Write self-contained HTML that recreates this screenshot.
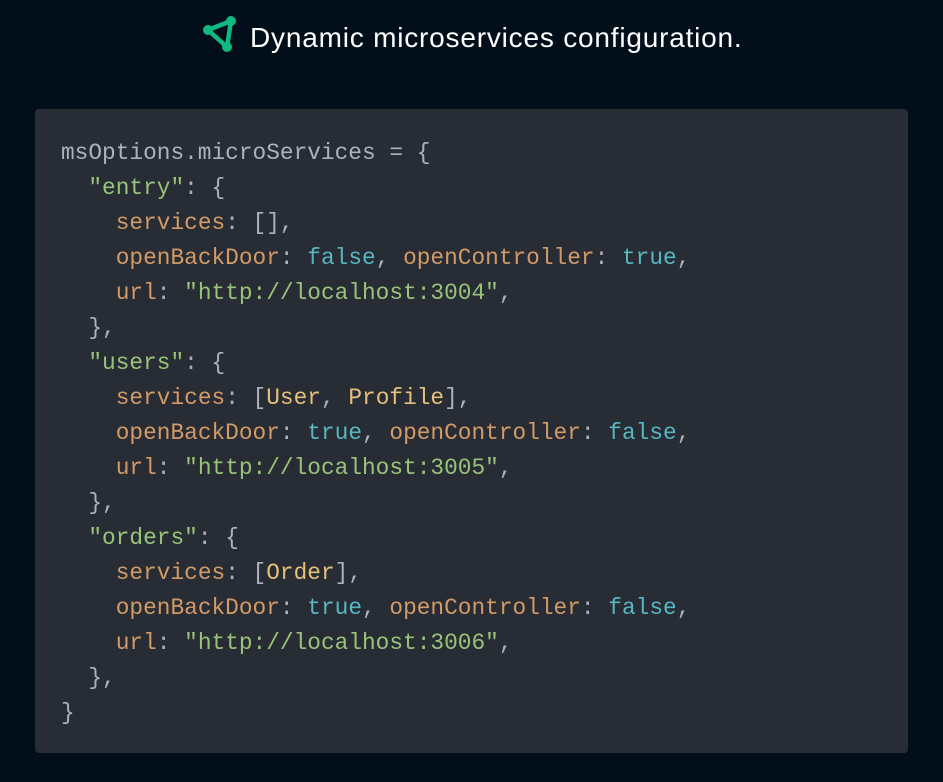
<!DOCTYPE html>
<html><head><style>
body{margin:0;width:943px;height:782px;background:#020f1a;overflow:hidden;font-family:"Liberation Sans",sans-serif}
.title{position:absolute;top:18px;left:250px;color:#fff;font-size:28px;letter-spacing:0.8px;line-height:40px;white-space:nowrap}
.icon{position:absolute;left:202px;top:16px}
.panel{position:absolute;left:35px;top:109px;width:873px;height:644px;background:#282c34;border-radius:4px}
pre{margin:0;position:absolute;left:61px;top:136px;font-family:"Liberation Mono",monospace;font-size:22.8px;line-height:35px;color:#abb2bf}
.g{color:#98c379}.o{color:#d19a66}.c{color:#56b6c2}.y{color:#e5c07b}
</style></head><body>
<svg class="icon" width="36" height="36" viewBox="0 0 36 36">
<path d="M29 5 L6 14 L25 31 Z" fill="none" stroke="#10b981" stroke-width="4.5" stroke-linejoin="round"/>
<circle cx="29" cy="5" r="5" fill="#10b981"/><circle cx="6" cy="14" r="5" fill="#10b981"/><circle cx="25" cy="31" r="5" fill="#10b981"/>
</svg>
<div class="title">Dynamic microservices configuration.</div>
<div class="panel"></div>
<pre>msOptions.microServices = {
  <span class="g">"entry"</span>: {
    <span class="o">services</span>: [],
    <span class="o">openBackDoor</span>: <span class="c">false</span>, <span class="o">openController</span>: <span class="c">true</span>,
    <span class="o">url</span>: <span class="g">"http://localhost:3004"</span>,
  },
  <span class="g">"users"</span>: {
    <span class="o">services</span>: [<span class="y">User</span>, <span class="y">Profile</span>],
    <span class="o">openBackDoor</span>: <span class="c">true</span>, <span class="o">openController</span>: <span class="c">false</span>,
    <span class="o">url</span>: <span class="g">"http://localhost:3005"</span>,
  },
  <span class="g">"orders"</span>: {
    <span class="o">services</span>: [<span class="y">Order</span>],
    <span class="o">openBackDoor</span>: <span class="c">true</span>, <span class="o">openController</span>: <span class="c">false</span>,
    <span class="o">url</span>: <span class="g">"http://localhost:3006"</span>,
  },
}</pre>
</body></html>
